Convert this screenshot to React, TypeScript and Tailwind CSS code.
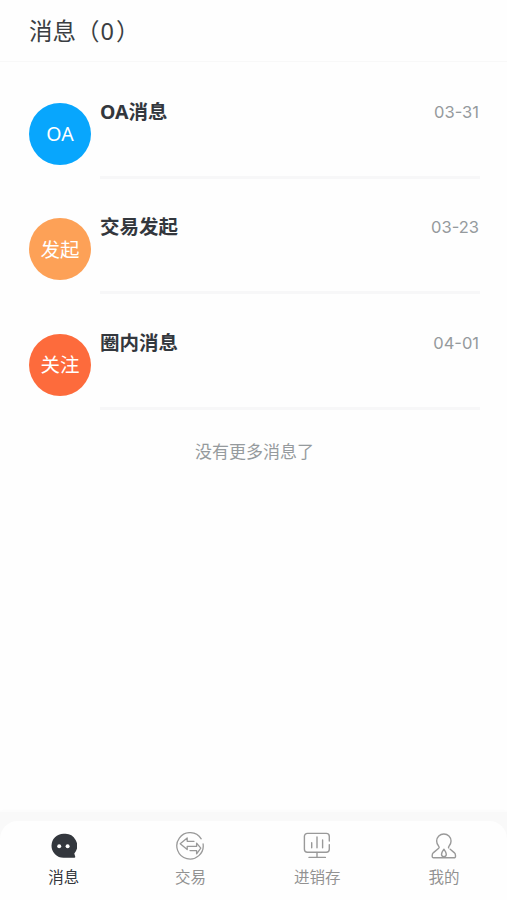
import type { ReactNode } from 'react';
import { clsx } from 'clsx';

interface Message {
  id: string;
  badge: string;
  color: string;
  title: string;
  date: string;
}

const messages: Message[] = [
  { id: 'oa', badge: 'OA', color: 'bg-[#08a6fd]', title: 'OA消息', date: '03-31' },
  { id: 'trade', badge: '发起', color: 'bg-[#fda157]', title: '交易发起', date: '03-23' },
  { id: 'circle', badge: '关注', color: 'bg-[#fd6b3c]', title: '圈内消息', date: '04-01' },
];

function ChatIcon() {
  return (
    <svg width="28" height="28" viewBox="0 0 28 28">
      <path d="M14.5 1.8a12 12 0 1 0 0 24h10.8q1.2 0 .9-1.2l-.9-3.2a12 12 0 0 0-10.8-19.6Z" fill="#33373d" />
      <circle cx="10.2" cy="14.2" r="2" fill="#fff" />
      <circle cx="18.6" cy="14.2" r="2" fill="#fff" />
    </svg>
  );
}

function TradeIcon() {
  return (
    <svg width="28" height="28" viewBox="0 0 28 28" fill="none" stroke="#999" strokeWidth="1.3" strokeLinecap="round" strokeLinejoin="round">
      <path d="M25.2 6.8A13.2 13.2 0 1 0 27.1 12" />
      <path d="M18 9.3h-6.8V6L4.2 11.8l7 5.8v-3.2h9.4v-3.2l4.2 5-4.2 5.6v-3.2H14" />
    </svg>
  );
}

function StockIcon() {
  return (
    <svg width="28" height="28" viewBox="0 0 28 28" fill="none" stroke="#999" strokeWidth="1.4" strokeLinecap="round" strokeLinejoin="round">
      <path d="M26.3 9V4.4a3 3 0 0 0-3-3H4.4a3 3 0 0 0-3 3v12.8a3 3 0 0 0 3 3h18.9a3 3 0 0 0 3-3v-4.6" />
      <path d="M8.7 10.8v5M14 5v10.8M19.6 8v7.8M14 20.4v4.8M6 25.4h16.4" />
    </svg>
  );
}

function ProfileIcon() {
  return (
    <svg width="28" height="28" viewBox="0 0 28 28" fill="none" stroke="#999" strokeWidth="1.4" strokeLinecap="round" strokeLinejoin="round">
      <path d="M20.2 17.2l4 3.4q1.3 1.2 1.3 2.8v1a1.4 1.4 0 0 1-1.4 1.4H3.6a1.4 1.4 0 0 1-1.4-1.4v-1q0-1.6 1.3-2.8l5.2-4.4q1-1 0-2A7.2 7.2 0 1 1 19 14.2q-.9 1-.3 1.7" />
      <path d="M13.9 17.2q-2.4 3.4-2.4 5a2.4 2.4 0 0 0 4.8 0q0-1.6-2.4-5Z" />
    </svg>
  );
}

function MessageRow({ message }: { message: Message }) {
  return (
    <li className="flex h-[115.3px] items-start">
      <div
        className={clsx(
          'mt-1 flex size-[62px] shrink-0 items-center justify-center rounded-full text-[19.5px] text-white',
          message.color,
        )}
      >
        {message.badge}
      </div>
      <div className="ml-[9px] flex h-[80px] flex-1 items-start justify-between border-b-[3px] border-[#f7f7f8]">
        <h2 className="text-[19.5px] leading-[25px] font-bold text-[#33373d]">{message.title}</h2>
        <time className="mr-px font-[Inter,sans-serif] text-[16.5px] leading-[26px] text-[#959a9d]">{message.date}</time>
      </div>
    </li>
  );
}

function NavItem({ label, active, children }: { label: string; active?: boolean; children: ReactNode }) {
  return (
    <button
      className={clsx(
        'flex flex-1 flex-col items-center pt-[11px] text-[15.5px] leading-6',
        active ? 'text-[#33373d]' : 'text-[#929292]',
      )}
    >
      {children}
      <span className="mt-[5px] ml-px">{label}</span>
    </button>
  );
}

export default function App() {
  return (
    <div className="flex h-[900px] w-[507px] flex-col overflow-hidden bg-[#fefefe] font-['Noto_Sans','Noto_Sans_CJK_SC',sans-serif]">
      <header className="flex h-[62px] shrink-0 items-center border-b border-[#f8f8f8] pl-[29px]">
        <h1 className="text-[23.5px] leading-8 text-[#3b3e42]">
          消息（<span className="mr-0.5 ml-px">0</span>）
        </h1>
      </header>

      <main className="flex-1 pt-[37px] pr-[27px] pl-[29px]">
        <ul>
          {messages.map((message) => (
            <MessageRow key={message.id} message={message} />
          ))}
        </ul>
        <p className="-mt-[5px] text-center text-[17px] leading-6 text-[#959a9d]">没有更多消息了</p>
      </main>

      <div className="shrink-0 bg-[#f9f9f9] pt-[9px] shadow-[0_-1px_3px_#fafafa]">
        <nav className="flex h-[79px] rounded-t-[18px] bg-[#fefefe]">
          <NavItem label="消息" active>
            <ChatIcon />
          </NavItem>
          <NavItem label="交易">
            <TradeIcon />
          </NavItem>
          <NavItem label="进销存">
            <StockIcon />
          </NavItem>
          <NavItem label="我的">
            <ProfileIcon />
          </NavItem>
        </nav>
      </div>
    </div>
  );
}
